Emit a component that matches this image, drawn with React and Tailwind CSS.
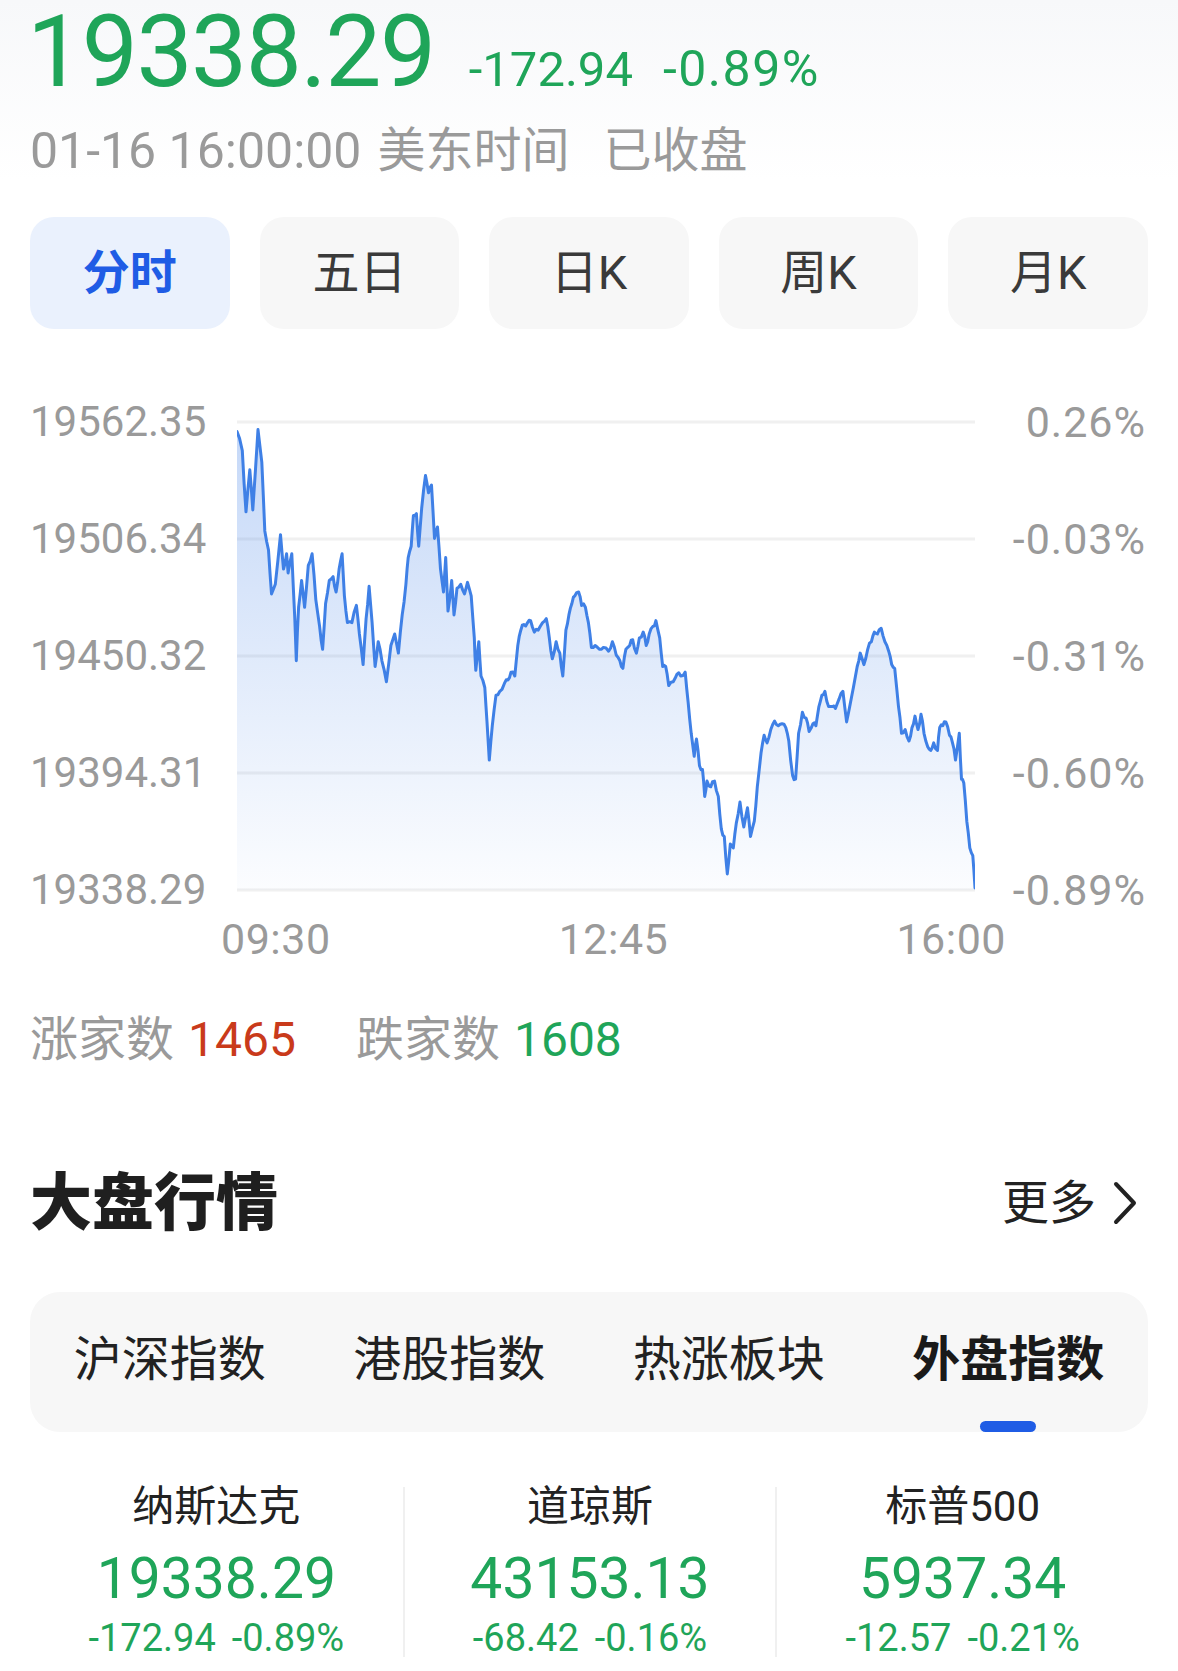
import React from 'react'

// traced from the reference, in crop units (x: 315..1298, y: 135..1360)
const trace = [
  [315,160],[322,210],[327,370],[332,260],[336,365],[343,155],[348,240],[352,420],[357,470],[361,585],
  [366,560],[373,430],[377,520],[381,480],[383,530],[388,480],[392,650],[394,760],[397,620],[401,550],
  [405,620],[410,510],[415,480],[420,600],[425,670],[429,730],[433,610],[438,550],[443,540],[447,580],
  [451,520],[455,480],[458,590],[462,660],[468,660],[474,615],[478,690],[483,770],[487,650],[491,565],
  [495,660],[499,775],[503,710],[508,760],[514,815],[520,720],[525,690],[530,740],[535,640],[540,560],
  [543,490],[547,460],[550,380],[554,375],[557,460],[561,360],[566,275],[570,320],[574,300],[578,440],
  [582,410],[586,520],[590,580],[593,490],[596,630],[601,550],[604,640],[608,570],[613,560],[618,585],
  [622,555],[627,590],[631,700],[633,785],[637,710],[640,800],[645,830],[648,920],[651,1020],[655,930],
  [660,850],[665,840],[671,820],[676,810],[680,790],[685,800],[689,720],[693,680],[697,665],[702,660],
  [706,655],[711,685],[716,680],[722,660],[727,650],[731,700],[735,755],[740,710],[745,740],[749,800],
  [753,680],[757,640],[761,610],[765,590],[770,580],[774,615],[779,620],[783,660],[787,725],[792,720],
  [798,730],[803,725],[810,735],[815,710],[820,745],[825,760],[829,780],[833,730],[838,720],[842,705],
  [847,740],[851,700],[856,685],[860,720],[864,690],[869,670],[873,655],[878,700],[882,775],[886,775],
  [890,825],[896,815],[901,795],[906,800],[912,790],[916,870],[920,950],[924,1010],[927,965],[931,1035],
  [935,1045],[938,1115],[941,1075],[946,1090],[951,1075],[956,1115],[960,1200],[964,1220],[968,1318],
  [972,1240],[976,1250],[980,1185],[985,1130],[990,1195],[995,1145],[999,1220],[1004,1180],[1008,1090],
  [1013,1000],[1017,955],[1021,975],[1026,940],[1031,918],[1036,930],[1041,925],[1046,935],[1050,970],
  [1055,1060],[1059,1070],[1063,950],[1068,895],[1073,910],[1077,945],[1082,925],[1086,930],[1090,880],
  [1094,850],[1098,840],[1103,880],[1108,880],[1112,885],[1117,860],[1122,840],[1127,920],[1131,880],
  [1136,830],[1141,775],[1145,740],[1150,770],[1155,730],[1160,710],[1164,685],[1168,690],[1173,675],
  [1178,710],[1183,735],[1187,770],[1191,780],[1196,880],[1200,950],[1205,940],[1210,970],[1214,935],
  [1218,905],[1222,940],[1226,900],[1230,950],[1235,985],[1239,995],[1243,975],[1248,995],[1251,935],
  [1255,930],[1259,920],[1264,955],[1268,975],[1272,1020],[1277,950],[1280,1070],[1283,1080],[1287,1180],
  [1291,1250],[1295,1270],[1298,1355],
]

function buildPoints() {
  let seed = 7
  const rnd = () => {
    seed = (seed * 16807) % 2147483647
    return seed / 2147483647 - 0.5
  }
  const base = trace.map(([x, y]) => [(x - 315) * 0.7508, 22 + (y - 135) * 0.382])
  const out = []
  for (let i = 0; i < base.length - 1; i++) {
    const [x0, y0] = base[i]
    const [x1, y1] = base[i + 1]
    out.push([x0, y0])
    out.push([x0 + (x1 - x0) / 2, y0 + (y1 - y0) / 2 + rnd() * 5])
  }
  out.push(base[base.length - 1])
  return out
}

const points = buildPoints()
const lineD = 'M' + points.map(p => p[0].toFixed(1) + ',' + Math.min(p[1], 490).toFixed(1)).join('L')
const areaD = lineD + `L${points[points.length - 1][0].toFixed(1)},490L0,490Z`

const yLabels = ['19562.35', '19506.34', '19450.32', '19394.31', '19338.29']
const pctLabels = ['0.26%', '-0.03%', '-0.31%', '-0.60%', '-0.89%']
const periods = ['分时', '五日', '日K', '周K', '月K']
const markets = ['沪深指数', '港股指数', '热涨板块', '外盘指数']
const indices = [
  { name: '纳斯达克', value: '19338.29', chg: '-172.94', pct: '-0.89%' },
  { name: '道琼斯', value: '43153.13', chg: '-68.42', pct: '-0.16%' },
  { name: '标普500', value: '5937.34', chg: '-12.57', pct: '-0.21%' },
]

const Chart = () => (
  <div className="mt-[71px] flex">
    <div className="w-[207px] pr-[31px] h-[512px] flex flex-col justify-between text-right text-[42px] leading-[44px] text-[#9a9a9a]">
      {yLabels.map(l => <div key={l}>{l}</div>)}
    </div>
    <svg width="738" height="512" viewBox="0 0 738 512" className="shrink-0">
      <defs>
        <linearGradient id="fill" x1="0" y1="0" x2="0" y2="1">
          <stop offset="0%" stopColor="#4a86e8" stopOpacity="0.32" />
          <stop offset="100%" stopColor="#4a86e8" stopOpacity="0.02" />
        </linearGradient>
      </defs>
      {[0, 1, 2, 3, 4].map(i => (
        <line key={i} x1="0" x2="738" y1={22 + i * 117} y2={22 + i * 117} stroke="#f0f0f0" strokeWidth="3" />
      ))}
      <path d={areaD} fill="url(#fill)" />
      <path d={lineD} fill="none" stroke="#3f80e6" strokeWidth="3" strokeLinejoin="round" strokeLinecap="round" />
    </svg>
    <div className="flex-1 h-[512px] pr-[2px] flex flex-col justify-between text-right text-[43px] leading-[44px] text-[#9a9a9a] tracking-[1px]">
      {pctLabels.map(l => <div key={l}>{l}</div>)}
    </div>
  </div>
)

export default function App() {
  return (
    <div className="w-[1178px] h-[1671px] bg-white overflow-hidden font-[family-name:Roboto,'Noto_Sans_CJK_SC',sans-serif]">
      <div className="bg-gradient-to-b from-[#f7f8fa] to-white px-[30px] pt-[2px]">
        {/* price */}
        <div className="flex items-baseline h-[100px]">
          <span className="-ml-[3px] text-[100px] leading-[100px] tracking-[-1.5px] text-[#1fa559]">19338.29</span>
          <span className="ml-[34px] text-[49px] leading-[60px] text-[#1fa559]">-172.94</span>
          <span className="ml-[30px] text-[50px] leading-[60px] tracking-[1.5px] text-[#1fa559]">-0.89%</span>
        </div>
        <div className="mt-[19px] h-[60px] flex items-center text-[50px] text-[#9a9a9a] whitespace-nowrap">
          <span>01-16 16:00:00</span>
          <span className="ml-[16px] text-[48px]">美东时间</span>
          <span className="ml-[34px] text-[48px]">已收盘</span>
        </div>
      </div>

      <div className="px-[30px]">
        {/* period tabs */}
        <div className="mt-[36px] flex gap-[30px]">
          {periods.map((p, i) => (
            <div
              key={p}
              className={
                i === 0
                  ? 'w-[200px] h-[112px] rounded-[24px] bg-[#eaf1fd] flex items-center justify-center text-[47px] font-bold text-[#1f5ce5]'
                  : 'w-[200px] h-[112px] rounded-[24px] bg-[#f7f7f7] flex items-center justify-center text-[47px] text-[#3a3a3a]'
              }
            >
              {p}
            </div>
          ))}
        </div>

        <Chart />

        <div className="mt-[5px] ml-[191px] w-[785px] flex justify-between text-[43px] leading-[44px] text-[#9a9a9a] tracking-[0.5px]">
          <span>09:30</span>
          <span>12:45</span>
          <span>16:00</span>
        </div>

        {/* advancers / decliners */}
        <div className="mt-[51px] h-[56px] flex items-center text-[48px] whitespace-nowrap">
          <span className="text-[#9a9a9a]">涨家数</span>
          <span className="ml-[14px] text-[#c93a1b]">1465</span>
          <span className="ml-[60px] text-[#9a9a9a]">跌家数</span>
          <span className="ml-[14px] text-[#1fa559]">1608</span>
        </div>

        {/* section header */}
        <div className="mt-[99px] h-[72px] flex items-center justify-between">
          <span className="text-[62px] font-black text-[#1f1f1f]">大盘行情</span>
          <span className="flex items-center text-[47px] text-[#222]">
            更多
            <svg width="26" height="44" viewBox="0 0 26 44" className="ml-[16px] mr-[10px]">
              <path d="M4 3 L22 22 L4 41" fill="none" stroke="#222" strokeWidth="4" strokeLinecap="round" strokeLinejoin="round" />
            </svg>
          </span>
        </div>

        {/* market segmented tabs */}
        <div className="mt-[53px] h-[140px] rounded-[30px] bg-[#f7f7f7] grid grid-cols-4">
          {markets.map((m, i) => (
            <div key={m} className="flex flex-col items-center pt-[40px]">
              <span className={i === 3 ? 'text-[48px] leading-[56px] font-bold text-[#1a1a1a]' : 'text-[48px] leading-[56px] text-[#222]'}>{m}</span>
              {i === 3 && <span className="mt-auto w-[56px] h-[11px] rounded-full bg-[#1f5ce5]" />}
            </div>
          ))}
        </div>

        {/* index cards */}
        <div className="mt-[55px] grid grid-cols-3">
          {indices.map((d, i) => (
            <div key={d.name} className={i === 0 ? 'h-[170px] flex flex-col items-center' : 'h-[170px] flex flex-col items-center border-l-2 border-[#f0f0f0]'}>
              <span className="text-[42px] leading-[40px] text-[#222]">{d.name}</span>
              <span className="mt-[20px] text-[57px] leading-[64px] text-[#1fa559]">{d.value}</span>
              <span className="mt-[5px] text-[38px] leading-[44px] text-[#1fa559] whitespace-nowrap">
                {d.chg}
                <span className="ml-[16px]">{d.pct}</span>
              </span>
            </div>
          ))}
        </div>
      </div>
    </div>
  )
}
